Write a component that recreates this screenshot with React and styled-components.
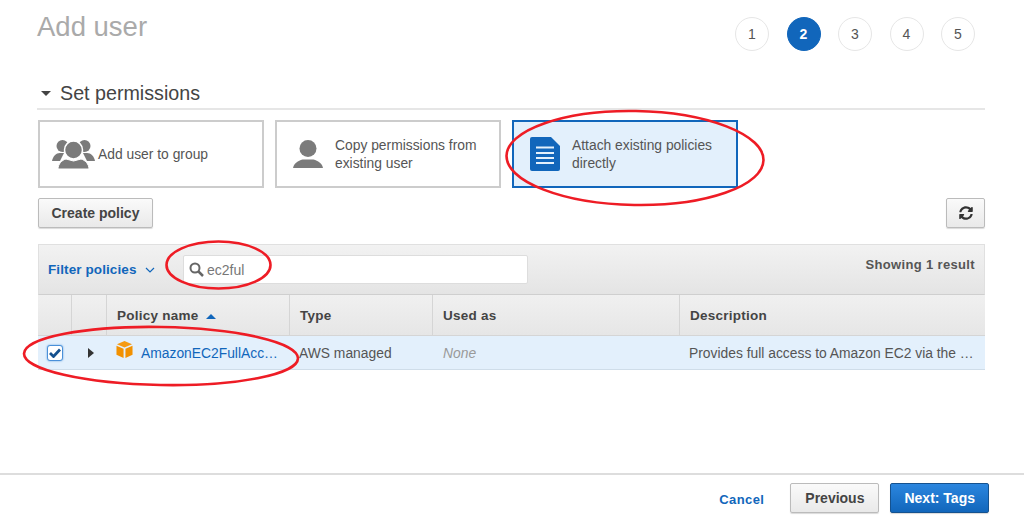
import styled, { createGlobalStyle } from 'styled-components'
import { FaSyncAlt } from 'react-icons/fa'

const GlobalStyle = createGlobalStyle`
	html, body {
		margin: 0;
		padding: 0;
		background: #fff;
	}
	* {
		box-sizing: border-box;
	}
`

const Page = styled.div`
	position: relative;
	width: 1024px;
	height: 517px;
	overflow: hidden;
	display: flex;
	flex-direction: column;
	font-family: 'Liberation Sans', Arial, sans-serif;
	font-size: 13.85px;
	color: #555;
`

const Content = styled.div`
	flex: 1;
	padding: 0 39px 0 37px;
`

const Header = styled.div`
	height: 68px;
	display: flex;
	justify-content: space-between;
	padding: 11px 10px 0 0;
`

const Title = styled.h1`
	margin: 0;
	font-size: 27.5px;
	line-height: 32px;
	font-weight: 400;
	color: #aaa;
`

const Steps = styled.div`
	display: flex;
	gap: 17.5px;
	margin-top: 6px;
`

const Step = styled.div`
	width: 34px;
	height: 34px;
	border-radius: 50%;
	display: flex;
	align-items: center;
	justify-content: center;
	font-size: 14px;
	border: 1px solid ${(p) => (p.$active ? '#1166bb' : '#e6e6e6')};
	background: ${(p) => (p.$active ? '#1166bb' : '#fff')};
	color: ${(p) => (p.$active ? '#fff' : '#555')};
	font-weight: ${(p) => (p.$active ? 700 : 400)};
`

const SectionHead = styled.div`
	height: 42px;
	display: flex;
	align-items: center;
	padding: 9px 0 0 4px;
	border-bottom: 2px solid #e6e6e6;
`

const Caret = styled.span`
	width: 0;
	height: 0;
	border-left: 5px solid transparent;
	border-right: 5px solid transparent;
	border-top: 5px solid #444;
	margin: 2px 9px 0 0;
`

const SectionTitle = styled.h2`
	margin: 0;
	font-size: 19.7px;
	line-height: 24px;
	font-weight: 400;
	color: #444;
`

const Choices = styled.div`
	display: flex;
	gap: 11px;
	margin: 10px 0 0 1px;
`

const Choice = styled.div`
	width: 226px;
	height: 68px;
	display: flex;
	align-items: center;
	padding-left: ${(p) => (p.$tight ? '12px' : '16px')};
	gap: ${(p) => (p.$tight ? '3px' : '12px')};
	line-height: 18px;
	border: 2px solid ${(p) => (p.$active ? '#1166bb' : '#ccc')};
	background: ${(p) => (p.$active ? '#e3f0fc' : '#fff')};
`

const Actions = styled.div`
	display: flex;
	justify-content: space-between;
	margin: 10px 0 0 1px;
`

const Button = styled.button`
	height: 30px;
	padding: 0 ${(p) => p.$pad || '14px'};
	font-family: inherit;
	font-size: 14px;
	font-weight: 700;
	color: #444;
	border: 1px solid #bbb;
	border-radius: 2px;
	background: linear-gradient(#fafafa, #e9e9e9);
	box-shadow: 0 1px 1px rgba(0, 0, 0, 0.15);
`

const RefreshButton = styled(Button)`
	width: 39px;
	padding: 0;
	display: flex;
	align-items: center;
	justify-content: center;
`

const Table = styled.div`
	margin: 16px 0 0 1px;
`

const FilterBar = styled.div`
	height: 51px;
	display: flex;
	align-items: flex-start;
	padding: 10px 9px 0 9px;
	background: linear-gradient(#f2f2f2, #e4e4e4);
	border: 1px solid #e0e0e0;
	border-bottom: 1px solid #cfcfcf;
`

const FilterLabel = styled.span`
	display: flex;
	align-items: center;
	gap: 8px;
	height: 29px;
	width: 135px;
	color: #1166bb;
	font-weight: 700;
	font-size: 13.5px;
	letter-spacing: 0.1px;
`

const SearchBox = styled.div`
	width: 345px;
	height: 29px;
	display: flex;
	align-items: center;
	gap: 3px;
	padding-left: 5px;
	background: #fff;
	border: 1px solid #ddd;
	border-radius: 2px;
	color: #777;
	font-size: 14px;
`

const ResultCount = styled.span`
	margin-left: auto;
	padding-top: 2px;
	font-weight: 700;
	font-size: 13px;
	letter-spacing: 0.35px;
	color: #555;
`

const columns = '34px 35px 183px 143px 247px 1fr'

const HeadRow = styled.div`
	display: grid;
	grid-template-columns: ${columns};
	height: 41px;
	background: linear-gradient(#f0f0f0, #e6e6e6);
	border-bottom: 1px solid #d5d5d5;
`

const HeadCell = styled.div`
	display: flex;
	align-items: center;
	gap: 7px;
	padding-left: 10px;
	font-weight: 700;
	font-size: 13.5px;
	letter-spacing: 0.25px;
	color: #444;
	border-right: 1px solid #d5d5d5;

	&:last-child {
		border-right: none;
	}
`

const SortArrow = styled.span`
	width: 0;
	height: 0;
	border-left: 5px solid transparent;
	border-right: 5px solid transparent;
	border-bottom: 5px solid #1166bb;
	margin-top: 2px;
`

const DataRow = styled.div`
	display: grid;
	grid-template-columns: ${columns};
	height: 34px;
	background: #e3f0fc;
	border-bottom: 1px solid #cfdde9;
`

const DataCell = styled.div`
	display: flex;
	align-items: center;
	justify-content: ${(p) => (p.$center ? 'center' : 'flex-start')};
	gap: 8px;
	min-width: 0;
	padding-left: ${(p) => p.$pad || '0'};
	white-space: nowrap;
	font-style: ${(p) => (p.$muted ? 'italic' : 'normal')};
	color: ${(p) => (p.$muted ? '#999' : '#555')};
`

const CheckBox = styled.span`
	width: 16px;
	height: 16px;
	display: flex;
	align-items: center;
	justify-content: center;
	border: 1.5px solid #4a90d9;
	border-radius: 3px;
	background: #fff;
	box-shadow: 0 0 2px #5a9bdc;
`

const RowCaret = styled.span`
	width: 0;
	height: 0;
	margin-left: 2px;
	border-top: 5px solid transparent;
	border-bottom: 5px solid transparent;
	border-left: 6px solid #333;
`

const PolicyLink = styled.a`
	color: #1166bb;
`

const Footer = styled.div`
	height: 44px;
	flex: none;
	display: flex;
	align-items: flex-start;
	justify-content: flex-end;
	gap: 11px;
	padding: 8px 35px 0 0;
	border-top: 2px solid #ddd;
`

const CancelLink = styled.a`
	align-self: center;
	margin: -2px 15px 0 0;
	font-weight: 700;
	font-size: 13px;
	letter-spacing: 0.4px;
	color: #1166bb;
`

const PrimaryButton = styled(Button)`
	color: #fff;
	border-color: #15528f;
	background: linear-gradient(#2b86df, #1166bb);
`

const Annotations = styled.svg`
	position: absolute;
	inset: 0;
	pointer-events: none;
`

const BoxSvg = styled.svg`
	flex: none;
	margin: 0 0 6px 1px;
`

const GroupIcon = () => (
	<svg width="43" height="29" viewBox="0 0 43 29" fill="#7b7b7b">
		<circle cx="10.5" cy="6" r="6" />
		<circle cx="32.5" cy="6" r="6" />
		<path d="M0 21c1-5 4-8 8-8h4l-4 8z" />
		<path d="M43 21c-1-5-4-8-8-8h-4l4 8z" />
		<circle cx="21.5" cy="10" r="9" stroke="#fff" strokeWidth="1.5" />
		<path d="M6 29c0-5 4-9 8-10l7.5 2 7.5-2c4 1 8 5 8 10z" stroke="#fff" strokeWidth="1" />
	</svg>
)

const UserIcon = () => (
	<svg width="30" height="28" viewBox="0 0 30 28" fill="#7b7b7b">
		<circle cx="15" cy="8.5" r="8.5" />
		<path d="M0 28c1-5 5-7 9.5-8.5h11c4.5 1.5 8.5 3.5 9.5 8.5z" />
	</svg>
)

const DocIcon = () => (
	<svg width="30" height="34" viewBox="0 0 30 34">
		<path d="M2 0h19l9 9v23a2 2 0 0 1-2 2H2a2 2 0 0 1-2-2V2a2 2 0 0 1 2-2z" fill="#1166bb" />
		<path d="M6 10.5h18M6 16h18M6 21h18M6 26h18" stroke="#e3f0fc" strokeWidth="2" />
	</svg>
)

const SearchIcon = () => (
	<svg width="15" height="15" viewBox="0 0 15 15" fill="none" stroke="#666" strokeWidth="2">
		<circle cx="6" cy="6" r="4.5" />
		<path d="M9.5 9.5L14 14" strokeWidth="2.5" />
	</svg>
)

const Chevron = () => (
	<svg width="10" height="6" viewBox="0 0 10 6" fill="none" stroke="#1166bb" strokeWidth="1.2">
		<path d="M1 1l4 4 4-4" />
	</svg>
)

const CheckMark = () => (
	<svg width="12" height="10" viewBox="0 0 12 10" fill="none" stroke="#15518f" strokeWidth="2.8">
		<path d="M1 5l3.5 3.5L11 1.5" />
	</svg>
)

const BoxIcon = () => (
	<BoxSvg width="17" height="17" viewBox="0 0 18 18">
		<path d="M9 0l8 3.5L9 7 1 3.5z" fill="#f59a12" />
		<path d="M0.5 5L8 8.2V18L0.5 14.5z" fill="#f29100" />
		<path d="M17.5 5L10 8.2V18l7.5-3.5z" fill="#f29100" />
	</BoxSvg>
)

const stepNumbers = [1, 2, 3, 4, 5]

export default function App() {
	return (
		<Page>
			<GlobalStyle />
			<Content>
				<Header>
					<Title>Add user</Title>
					<Steps>
						{stepNumbers.map((n) => (
							<Step key={n} $active={n === 2}>
								{n}
							</Step>
						))}
					</Steps>
				</Header>
				<SectionHead>
					<Caret />
					<SectionTitle>Set permissions</SectionTitle>
				</SectionHead>
				<Choices>
					<Choice $tight>
						<GroupIcon />
						<span>Add user to group</span>
					</Choice>
					<Choice>
						<UserIcon />
						<span>
							Copy permissions from
							<br />
							existing user
						</span>
					</Choice>
					<Choice $active>
						<DocIcon />
						<span>
							Attach existing policies
							<br />
							directly
						</span>
					</Choice>
				</Choices>
				<Actions>
					<Button $pad="12.5px">Create policy</Button>
					<RefreshButton>
						<FaSyncAlt size={14} color="#333" />
					</RefreshButton>
				</Actions>
				<Table>
					<FilterBar>
						<FilterLabel>
							Filter policies <Chevron />
						</FilterLabel>
						<SearchBox>
							<SearchIcon />
							ec2ful
						</SearchBox>
						<ResultCount>Showing 1 result</ResultCount>
					</FilterBar>
					<HeadRow>
						<HeadCell />
						<HeadCell />
						<HeadCell>
							Policy name <SortArrow />
						</HeadCell>
						<HeadCell>Type</HeadCell>
						<HeadCell>Used as</HeadCell>
						<HeadCell>Description</HeadCell>
					</HeadRow>
					<DataRow>
						<DataCell $center>
							<CheckBox>
								<CheckMark />
							</CheckBox>
						</DataCell>
						<DataCell $center>
							<RowCaret />
						</DataCell>
						<DataCell $pad="8px">
							<BoxIcon />
							<PolicyLink>AmazonEC2FullAcc…</PolicyLink>
						</DataCell>
						<DataCell $pad="9px">AWS managed</DataCell>
						<DataCell $pad="10px" $muted>
							None
						</DataCell>
						<DataCell $pad="9px">Provides full access to Amazon EC2 via the …</DataCell>
					</DataRow>
				</Table>
			</Content>
			<Footer>
				<CancelLink>Cancel</CancelLink>
				<Button>Previous</Button>
				<PrimaryButton $pad="13px">Next: Tags</PrimaryButton>
			</Footer>
			<Annotations width="1024" height="517" fill="none" stroke="#ee1c25" strokeWidth="2.6">
				<ellipse cx="635" cy="158" rx="128.5" ry="47" transform="rotate(1 635 158)" />
				<ellipse cx="218.5" cy="265" rx="52" ry="23.5" />
				<ellipse cx="161" cy="356" rx="137" ry="29" transform="rotate(1 161 356)" />
			</Annotations>
		</Page>
	)
}
